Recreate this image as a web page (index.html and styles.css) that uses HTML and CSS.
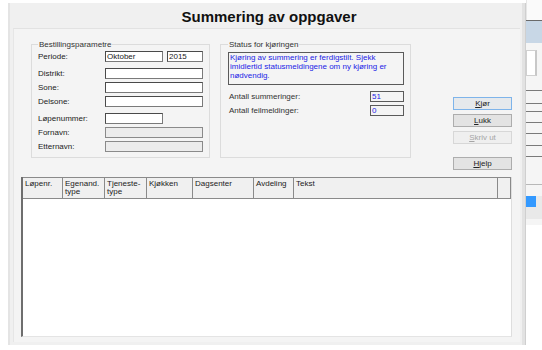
FILE: index.html
```html
<!DOCTYPE html>
<html lang="no">
<head>
  <meta charset="UTF-8">
  <title>Summering av oppgaver</title>
  <link rel="stylesheet" href="styles.css">
</head>
<body>

  <div class="dialog">
    <div class="titlebar">Summering av oppgaver</div>

    <div class="panel">
      <div class="toprow">
        <div class="groups">
          <fieldset class="group params">
            <legend>Bestillingsparametre</legend>
            <div class="row">
              <label>Periode:</label>
              <input type="text" class="f-month" value="Oktober">
              <input type="text" class="f-year" value="2015">
            </div>
            <div class="row spaced">
              <label>Distrikt:</label>
              <input type="text" class="f-wide">
            </div>
            <div class="row">
              <label>Sone:</label>
              <input type="text" class="f-wide">
            </div>
            <div class="row">
              <label>Delsone:</label>
              <input type="text" class="f-wide">
            </div>
            <div class="row spaced">
              <label>Løpenummer:</label>
              <input type="text" class="f-month">
            </div>
            <div class="row">
              <label>Fornavn:</label>
              <input type="text" class="f-wide" disabled>
            </div>
            <div class="row">
              <label>Etternavn:</label>
              <input type="text" class="f-wide" disabled>
            </div>
          </fieldset>

          <fieldset class="group status">
            <legend>Status for kjøringen</legend>
            <div class="message">Kjøring av summering er ferdigstilt. Sjekk imidlertid statusmeldingene om ny kjøring er nødvendig.</div>
            <div class="count">
              <label>Antall summeringer:</label>
              <input type="text" class="f-count" value="51" readonly>
            </div>
            <div class="count">
              <label>Antall feilmeldinger:</label>
              <input type="text" class="f-count" value="0" readonly>
            </div>
          </fieldset>
        </div>

        <div class="buttons">
          <button class="btn default"><u>K</u>jør</button>
          <button class="btn"><u>L</u>ukk</button>
          <button class="btn" disabled><u>S</u>kriv ut</button>
          <button class="btn help"><u>H</u>jelp</button>
        </div>
      </div>

      <div class="list">
        <div class="list-head">
          <div class="col c-lop">Løpenr.</div>
          <div class="col c-egen">Egenand.<br>type</div>
          <div class="col c-tjen">Tjeneste-<br>type</div>
          <div class="col c-kjok">Kjøkken</div>
          <div class="col c-dag">Dagsenter</div>
          <div class="col c-avd">Avdeling</div>
          <div class="col c-tekst">Tekst</div>
          <div class="col c-end"></div>
        </div>
        <div class="list-body"></div>
      </div>
    </div>
  </div>

  <div class="side">
    <div class="side-top"></div>
    <div class="side-head"></div>
    <div class="side-box"></div>
    <div class="side-line" style="margin-top: 14px"></div>
    <div class="side-line" style="margin-top: 12px"></div>
    <div class="side-line" style="margin-top: 7px"></div>
    <div class="side-line" style="margin-top: 10px"></div>
    <div class="side-line" style="margin-top: 10px"></div>
    <div class="side-line" style="margin-top: 11px"></div>
    <div class="side-line" style="margin-top: 10px"></div>
    <div class="side-sep"></div>
    <div class="side-sel"><div class="side-blue"></div></div>
  </div>

</body>
</html>
```

FILE: styles.css
```css
body {
  margin: 0;
  padding: 3px 0 0 8px;
  background: #fff;
  font-family: "Liberation Sans", Arial, sans-serif;
  font-size: 8px;
  color: #222;
  display: flex;
  align-items: flex-start;
}

.dialog {
  width: 512px;
  height: 342px;
  background: #f0f0f0;
  border-left: 2px solid #e4e4e4;
  border-right: 3px solid #e2e2e2;
  box-shadow: 1px 0 0 #cfcfcf;
  display: flex;
  flex-direction: column;
}

.titlebar {
  height: 25px;
  line-height: 27px;
  text-align: center;
  padding-left: 6px;
  font-size: 15px;
  font-weight: bold;
  color: #111;
}

.panel {
  flex: 1;
  margin: 0 2px 3px 3px;
  background: #f4f4f4;
  border-top: 1px solid #e2e2e2;
  border-left: 1px solid #e6e6e6;
  padding: 11px 8px 0 7px;
  display: flex;
  flex-direction: column;
}

.toprow { display: flex; align-items: flex-start; padding-left: 10px; }
.groups { display: flex; gap: 10px; }

.group {
  margin: 0;
  min-width: 0;
  border: 1px solid #dcdcdc;
  padding: 2px 6px 5px 6px;
}
.group legend {
  padding: 0 1px;
  margin-left: 0;
  line-height: 9px;
  color: #333;
}

.params { width: 179px; box-sizing: border-box; }
.status { width: 191px; box-sizing: border-box; padding: 3px 6px 5px 7px; }

.row { display: flex; gap: 4px; height: 11px; margin-top: 3px; align-items: center; }
.row:first-of-type { margin-top: 0; }
.row.spaced { margin-top: 6px; }
.row label { width: 63px; }

input {
  box-sizing: border-box;
  height: 11px;
  padding: 0 1px;
  font: inherit;
  font-size: 8px;
  color: #222;
  background: #fff;
  border: 1px solid #7a7a7a;
  border-top-color: #4a4a4a;
  border-left-color: #4a4a4a;
}
input:disabled { background: #ececec; border-color: #8a8a8a; }
.f-month { width: 58px; }
.f-year { width: 36px; }
.f-wide { width: 98px; }

.message {
  height: 33px;
  box-sizing: border-box;
  border: 1px solid #5a5a5a;
  background: #f4f4f4;
  color: #2323e6;
  padding: 0 1px;
  line-height: 9px;
}

.count { display: flex; justify-content: space-between; align-items: center; margin-top: 3px; height: 11px; }
.message + .count { margin-top: 6px; }
.count label { padding-left: 1px; color: #333; }
.f-count { width: 34px; background: #f4f4f4; color: #2323e6; border-color: #5a5a5a; }

.buttons {
  margin-left: auto;
  padding-top: 57px;
  width: 59px;
  display: flex;
  flex-direction: column;
  gap: 4px;
}
.btn {
  height: 13px;
  padding: 0;
  font: inherit;
  font-size: 8px;
  color: #222;
  background: #e3e3e3;
  border: 1px solid #adadad;
}
.btn.default { border-color: #7eb4ea; background: #e6e9ec; }
.btn:disabled { color: #a5a5a5; background: #efefef; border-color: #d7d7d7; }
.btn.help { margin-top: 9px; }

.list {
  margin-top: 7px;
  height: 159px;
  display: flex;
  flex-direction: column;
  border-left: 2px solid #6e6e6e;
  border-right: 1px solid #dedede;
  border-bottom: 1px solid #e4e4e4;
  background: #fff;
}
.list-head {
  display: flex;
  height: 20px;
  background: #f0f0f0;
  border-top: 1px solid #8a8a8a;
  border-bottom: 1px solid #8a8a8a;
}
.col {
  box-sizing: border-box;
  border-right: 1px solid #8a8a8a;
  padding: 2px 2px 0 2px;
  line-height: 8px;
}
.c-lop { width: 40px; }
.c-egen { width: 42px; }
.c-tjen { width: 42px; }
.c-kjok { width: 46px; }
.c-dag { width: 61px; }
.c-avd { width: 40px; }
.c-tekst { width: 204px; }
.c-end { flex: 1; border-right: 1px solid #8a8a8a; }
.list-body { flex: 1; }

.side {
  width: 16px;
  margin-top: -3px;
  margin-left: 1px;
  display: flex;
  flex-direction: column;
  background: #f5f5f5;
  height: 225px;
}
.side-top { height: 20px; background: #fafafa; border-left: 1px solid #e6e6e6; }
.side-head { height: 22px; background: #c8d7e6; border-top: 1px solid #6a6a6a; }
.side-box { margin-top: 7px; width: 8px; height: 24px; background: #fff; border: 1px solid #d0d0d0; border-right: 2px solid #c8c8c8; }
.side-line { height: 1px; background: #7a7a7a; }
.side-sep { margin-top: 27px; height: 1px; background: #b8b8b8; }
.side-sel { margin-top: 11px; height: 23px; background: #e9e9e9; }
.side-blue { width: 10px; height: 11px; background: #3399ff; }
```
